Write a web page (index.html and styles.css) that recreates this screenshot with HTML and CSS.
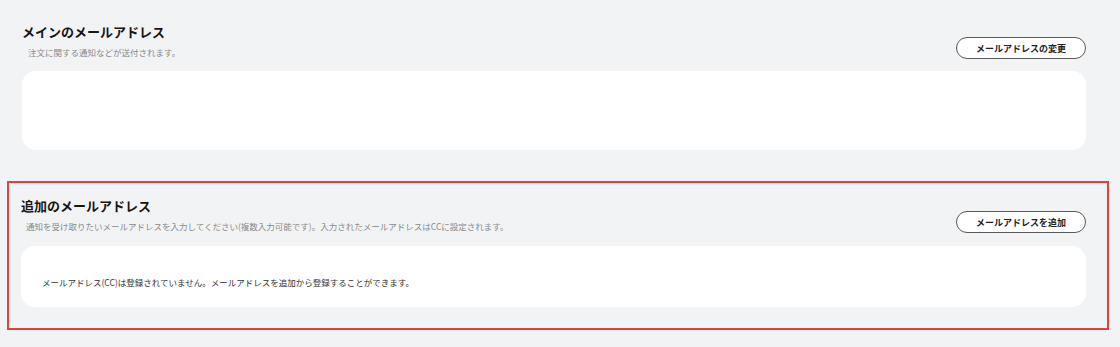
FILE: index.html
```html
<!DOCTYPE html>
<html lang="ja">
<head>
    <meta charset="UTF-8">
    <meta name="viewport" content="width=device-width, initial-scale=1.0">
    <title>メールアドレス設定</title>
    <link rel="stylesheet" href="styles.css">
</head>
<body>

    <div class="page">
        <!-- メインのメールアドレス -->
        <section class="mail-section">
            <div class="mail-section__header">
                <div>
                    <h2 class="mail-section__title">メインのメールアドレス</h2>
                    <p class="mail-section__note">注文に関する通知などが送付されます。</p>
                </div>
                <button class="pill-button">メールアドレスの変更</button>
            </div>
            <div class="mail-card mail-card--main"></div>
        </section>

        <!-- 追加のメールアドレス -->
        <section class="mail-section mail-section--highlight">
            <div class="mail-section__header">
                <div>
                    <h2 class="mail-section__title">追加のメールアドレス</h2>
                    <p class="mail-section__note">通知を受け取りたいメールアドレスを入力してください(複数入力可能です)。入力されたメールアドレスはCCに設定されます。</p>
                </div>
                <button class="pill-button">メールアドレスを追加</button>
            </div>
            <div class="mail-card mail-card--cc">
                メールアドレス(CC)は登録されていません。メールアドレスを追加から登録することができます。
            </div>
        </section>
    </div>

</body>
</html>
```

FILE: styles.css
```css
body {
    font-family: "Noto Sans CJK JP", "Noto Sans", sans-serif;
    margin: 0;
    padding: 0;
    background-color: #f2f3f5;
    color: #1b1b1b;
}

.page {
    padding: 24px 34px 0 22px;
}

.mail-section__header {
    display: flex;
    justify-content: space-between;
    align-items: flex-start;
}

.mail-section__title {
    margin: 0;
    font-size: 13px;
    line-height: 16px;
    font-weight: bold;
    color: #161616;
}

.mail-section__note {
    margin: 6px 0 0 6px;
    font-size: 8.5px;
    line-height: 12px;
    color: #8a8a8a;
}

.pill-button {
    margin-top: 13px;
    width: 130px;
    height: 22px;
    padding: 0;
    border: 1px solid #5a5a5a;
    border-radius: 11px;
    background-color: #ffffff;
    color: #222222;
    font-family: inherit;
    font-size: 9px;
    font-weight: bold;
    cursor: pointer;
}

.mail-card {
    margin-top: 12px;
    background-color: #ffffff;
    border-radius: 14px;
}

.mail-card--main {
    height: 79px;
}

/* 赤枠で囲まれた追加アドレス欄 */
.mail-section--highlight {
    margin: 31px -23px 0 -15px;
    padding: 15px 21px 21px 12px;
    border: 2px solid #e2403e;
}

.mail-section--highlight .mail-section__note {
    margin-left: 5px;
}

.mail-card--cc {
    margin-top: 13px;
    height: 61px;
    box-sizing: border-box;
    padding: 30px 21px 0;
    font-size: 8.5px;
    line-height: 12px;
    color: #333333;
}
```
